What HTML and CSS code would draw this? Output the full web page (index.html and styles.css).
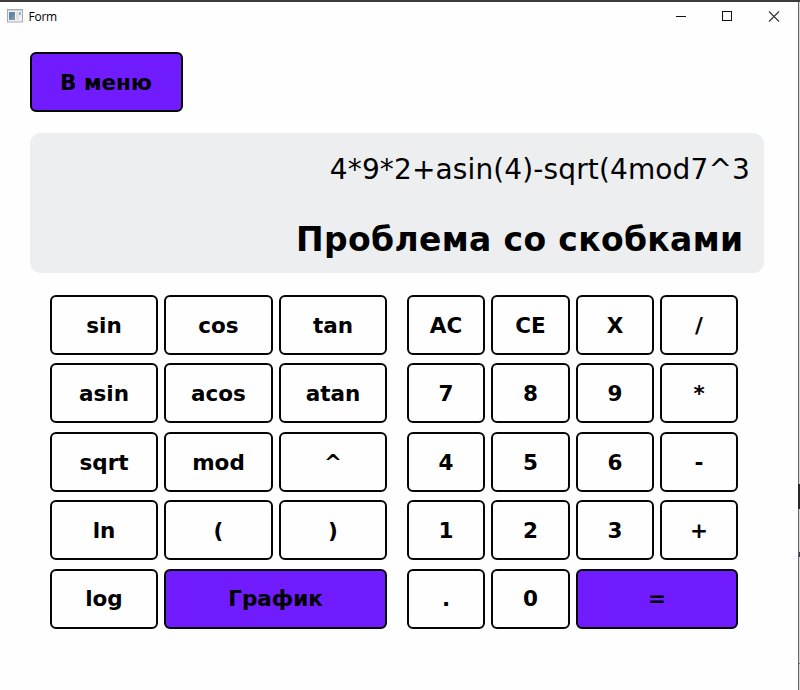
FILE: index.html
```html
<!DOCTYPE html>
<html lang="ru">
<head>
<meta charset="utf-8">
<title>Form</title>
<link rel="stylesheet" href="styles.css">
</head>
<body>
<div class="window">
  <header class="titlebar">
    <svg class="app-icon" width="16" height="14" viewBox="0 0 16 14">
      <rect x=".5" y=".5" width="15" height="12.5" fill="#f0f0f3" stroke="#aaaaae"/>
      <path d="M1 1.5h14" stroke="#d2d2d5"/>
      <rect x="2" y="3" width="6" height="8" fill="#5e87a8"/>
      <path d="M2 11L8 5v6z" fill="#7c949f"/>
      <rect x="9" y="3" width="3" height="8" fill="#e1e2e6"/>
      <rect x="12" y="3" width="2" height="3" fill="#9db3ce"/>
    </svg>
    <span class="title">Form</span>
    <svg class="controls" width="104" height="12" viewBox="0 0 104 12" fill="none" stroke="#111">
      <path d="M0 5.5h10"/>
      <rect x="46.5" y=".5" width="9" height="9"/>
      <path d="M93 .5l10 10M103 .5l-10 10" stroke="#333" stroke-width="1.1"/>
    </svg>
  </header>
  <main>
    <button class="key accent menu">В меню</button>
    <section class="display">
      <div class="expression">4*9*2+asin(4)-sqrt(4mod7^3</div>
      <div class="result">Проблема со скобками</div>
    </section>
    <div class="keypads">
      <div class="pad functions">
        <button class="key">sin</button><button class="key">cos</button><button class="key">tan</button>
        <button class="key">asin</button><button class="key">acos</button><button class="key">atan</button>
        <button class="key">sqrt</button><button class="key">mod</button><button class="key">^</button>
        <button class="key">ln</button><button class="key">(</button><button class="key">)</button>
        <button class="key">log</button><button class="key accent wide">График</button>
      </div>
      <div class="pad numbers">
        <button class="key">AC</button><button class="key">CE</button><button class="key">X</button><button class="key">/</button>
        <button class="key">7</button><button class="key">8</button><button class="key">9</button><button class="key">*</button>
        <button class="key">4</button><button class="key">5</button><button class="key">6</button><button class="key">-</button>
        <button class="key">1</button><button class="key">2</button><button class="key">3</button><button class="key">+</button>
        <button class="key">.</button><button class="key">0</button><button class="key accent wide">=</button>
      </div>
    </div>
  </main>
  <svg class="edge" width="2" height="690" viewBox="0 0 2 690">
    <path d="M.5 0v690" stroke="#686868"/>
    <path d="M1.5 2v688" stroke="#d8d8d8"/>
    <path d="M0 484h2v25H0z" fill="#292929"/>
    <path d="M1 552h1v5H1z" fill="#26365f"/>
    <path d="M1 663h1v1H1z" fill="#777"/>
  </svg>
</div>
</body>
</html>
```
FILE: styles.css
```css
* { box-sizing: border-box; }
body {
  margin: 0;
  background: #fefefe;
  color: #000;
  font-family: Verdana, "DejaVu Sans", sans-serif;
}
.window {
  position: relative;
  height: 690px;
  border-top: 2px solid #3d3b3c;
  overflow: hidden;
}
.edge { position: absolute; top: -2px; right: 0; }
.titlebar {
  display: flex;
  align-items: center;
  height: 29px;
  padding: 0 20px 0 7px;
}
.app-icon { position: relative; top: -1px; }
.title {
  margin-left: 5.5px;
  font: 12px/16px "Open Sans", sans-serif;
  letter-spacing: -0.25px;
}
.controls { margin-left: auto; }
main { padding: 21px 36px 0 29.5px; }
.key {
  display: flex;
  align-items: center;
  justify-content: center;
  min-width: 0;
  padding: 1px 0 0;
  border: 2px solid #050505;
  border-radius: 6px;
  background: #fefefe;
  color: #000;
  font: bold 21.5px/1 Verdana, "DejaVu Sans", sans-serif;
}
.accent { background: #701cff; }
.menu { width: 153px; height: 60px; }
.display {
  height: 140px;
  margin-top: 21px;
  padding: 19px 14px 0;
  border-radius: 11px;
  background: #eceef0;
  text-align: right;
  white-space: nowrap;
}
.expression {
  font-size: 28px;
  line-height: 36px;
  letter-spacing: 0.13px;
}
.result {
  margin: 31px 6.5px 0 0;
  font-size: 33px;
  font-weight: bold;
  line-height: 42px;
  letter-spacing: 0.35px;
}
.keypads {
  display: flex;
  gap: 20px;
  margin: 22px 0 0 20.5px;
}
.pad {
  display: grid;
  grid-auto-rows: 60px;
  gap: 8.4px 6px;
}
.functions { grid-template-columns: 108px 109px 108px; }
.numbers { grid-template-columns: 78px 79px 78px 78px; }
.wide { grid-column: span 2; }
```
